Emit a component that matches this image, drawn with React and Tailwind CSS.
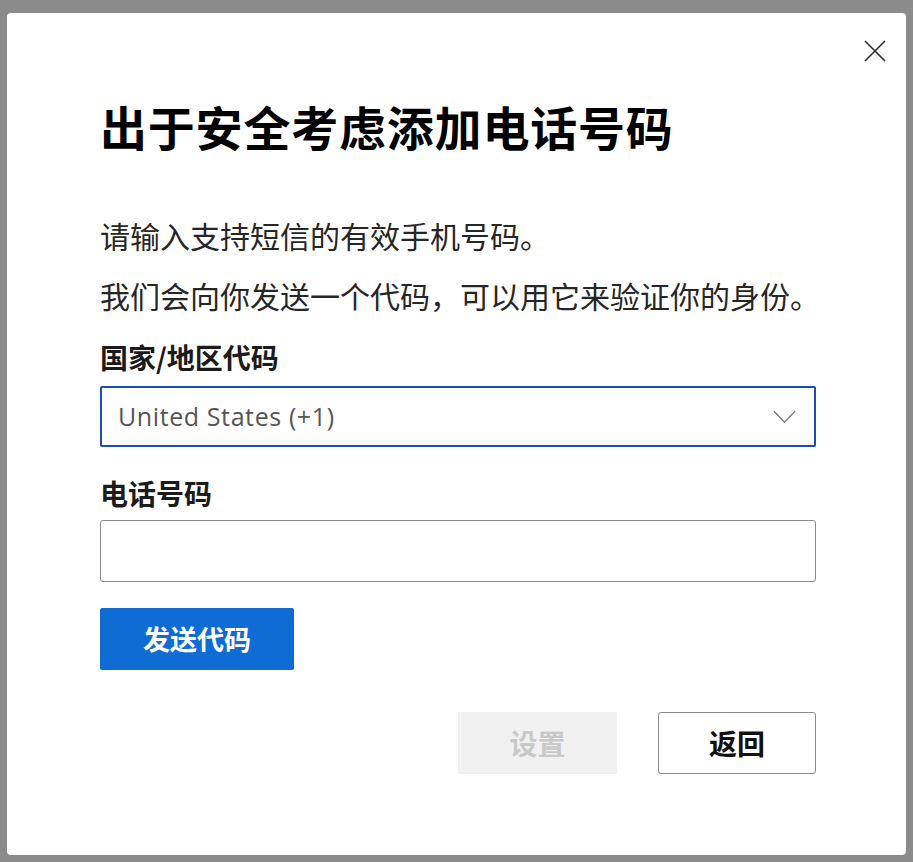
export default function App() {
  const cjk = { fontFamily: '"Noto Sans CJK SC", "Noto Sans", sans-serif' };

  return (
    <div className="w-[913px] h-[862px] bg-[#8b8b8b] pt-[13px] pl-[7px]" style={cjk}>
      <div className="w-[899px] h-[842px] bg-white rounded-[4px] flex flex-col pl-[93px] pr-[90px]">
        {/* close */}
        <div className="flex justify-end pt-[26px] -mr-[71px]">
          <button type="button" className="w-[24px] h-[24px] flex items-center justify-center">
            <svg width="24" height="24" viewBox="0 0 24 24" fill="none" stroke="#2b2b2b" strokeWidth="1.6">
              <path d="M2 2 L22 22 M22 2 L2 22" />
            </svg>
          </button>
        </div>

        <h1 className="mt-[35px] text-[47px] leading-[56px] font-bold text-black tracking-[0.8px]">
          出于安全考虑添加电话号码
        </h1>

        <p className="mt-[61px] text-[30px] leading-[40px] text-[#262626] whitespace-nowrap">
          请输入支持短信的有效手机号码。
        </p>
        <p className="mt-[20px] text-[30px] leading-[40px] text-[#262626] whitespace-nowrap">
          我们会向你发送一个代码，可以用它来验证你的身份。
        </p>

        <label className="mt-[24px] text-[28px] leading-[36px] font-semibold text-[#1b1b1b]">国家/地区代码</label>
        <div className="mt-[11px] h-[61px] border-2 border-[#1a4db8] rounded-[2px] flex items-center justify-between pl-[16px] pr-[18px]">
          <span
            className="text-[25px] tracking-[0.6px] text-[#555555]"
            style={{ fontFamily: '"Open Sans", "Noto Sans", sans-serif' }}
          >
            United States (+1)
          </span>
          <svg width="23" height="14" viewBox="0 0 24 14" fill="none" stroke="#7a7a7a" strokeWidth="1.4">
            <path d="M1 1 L12 12.5 L23 1" />
          </svg>
        </div>

        <label className="mt-[28px] text-[28px] leading-[36px] font-semibold text-[#1b1b1b]">电话号码</label>
        <input
          type="text"
          className="mt-[9px] h-[62px] border border-[#8a8a8a] rounded-[3px] px-[16px] text-[23px] outline-none"
        />

        <div className="mt-[26px] flex">
          <button
            type="button"
            className="w-[194px] h-[62px] bg-[#0f6cd4] text-white text-[27px] font-bold rounded-[2px]"
          >
            发送代码
          </button>
        </div>

        <div className="mt-[42px] flex justify-end gap-[41px]">
          <button
            type="button"
            className="w-[159px] h-[62px] bg-[#f1f1f1] text-[#c9c9c9] text-[28px] font-bold"
          >
            设置
          </button>
          <button
            type="button"
            className="w-[158px] h-[62px] bg-white border border-[#8a8a8a] rounded-[3px] text-[#111111] text-[28px] font-semibold"
          >
            返回
          </button>
        </div>
      </div>
    </div>
  );
}
